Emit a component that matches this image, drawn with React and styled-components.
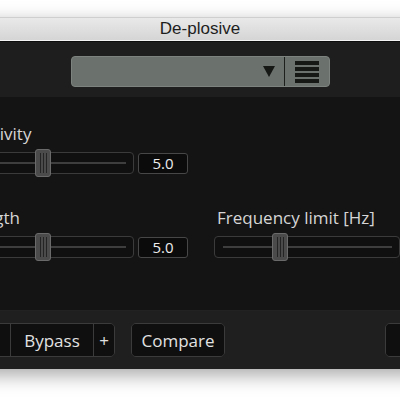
import React from "react";
import styled, {createGlobalStyle} from "styled-components";

const GlobalStyle = createGlobalStyle`
  html, body {
    margin: 0;
    padding: 0;
    background: #ffffff;
    overflow: hidden;
  }
`;

const Page = styled.div`
  width: 400px;
  height: 400px;
  overflow: hidden;
  padding-top: 17px;
  box-sizing: border-box;
`;

const Window = styled.div`
  width: 600px;
  margin-left: -100px;
  display: flex;
  flex-direction: column;
  box-shadow: 0 6px 18px rgba(0, 0, 0, 0.35);
  font-family: "Open Sans", "Noto Sans", sans-serif;
`;

const TitleBar = styled.div`
  height: 24px;
  box-sizing: border-box;
  border-top: 1px solid #cfcfcf;
  border-bottom: 1px solid #f4f4f4;
  background: linear-gradient(#e9e9e9, #d5d5d5);
  display: flex;
  align-items: center;
  justify-content: center;
  font-family: "Liberation Sans", Arial, sans-serif;
  font-size: 17px;
  color: #1e1e1e;
`;

const Header = styled.div`
  height: 56px;
  background: #1e1e1e;
  border-top: 1px solid #0e0e0e;
  display: flex;
  justify-content: center;
  align-items: flex-start;
  padding-top: 14px;
  box-sizing: border-box;
`;

const Preset = styled.div`
  width: 259px;
  height: 31px;
  display: flex;
  border-radius: 4px;
  border: 1px solid #7d837e;
  background: #6b716d;
  box-sizing: border-box;
  overflow: hidden;
`;

const PresetField = styled.div`
  flex: 1;
  display: flex;
  align-items: center;
  justify-content: flex-end;
  padding-right: 8px;
  border-right: 1px solid #1d1f1d;
`;

const PresetMenu = styled.div`
  width: 44px;
  display: flex;
  align-items: center;
  justify-content: center;
`;

const Main = styled.div`
  height: 213px;
  background: #141414;
  box-sizing: border-box;
  padding: 25px 0 0 52px;
  display: grid;
  grid-template-columns: 240px 190px;
  grid-template-rows: 84px 84px;
  column-gap: 22px;
  align-content: start;
`;

const Control = styled.div`
  display: flex;
  flex-direction: column;
  gap: 3px;
`;

const Label = styled.div`
  font-size: 17px;
  line-height: 24px;
  color: #d6d6d6;
  padding-left: ${p => p.$indent || 0}px;
`;

const SliderRow = styled.div`
  display: flex;
  align-items: center;
  gap: 4px;
  height: 28px;
`;

const Track = styled.div`
  position: relative;
  width: ${p => p.$width}px;
  height: 22px;
  border: 1px solid #3b3b3b;
  border-radius: 4px;
  box-sizing: border-box;
  background: #101010;
`;

const Groove = styled.div`
  position: absolute;
  left: 8px;
  right: 7px;
  top: 9px;
  height: 2px;
  background: #3e3e3e;
`;

const Thumb = styled.div`
  position: absolute;
  top: -4px;
  width: 16px;
  height: 28px;
  box-sizing: border-box;
  border: 1px solid #6a6a6a;
  border-radius: 3px;
  background: #4b4b4b;
  display: flex;
  justify-content: center;
  gap: 2px;
  padding: 3px 0;
  &::before, &::after, & > span {
    content: "";
    display: block;
    width: 1px;
    background: #242424;
  }
`;

const ValueBox = styled.div`
  width: 50px;
  height: 21px;
  box-sizing: border-box;
  border: 1px solid #474747;
  border-radius: 3px;
  background: #0b0b0b;
  color: #ececec;
  font-size: 15px;
  display: flex;
  align-items: center;
  justify-content: center;
`;

const Footer = styled.div`
  height: 59px;
  background: #1f1f1f;
  border-top: 1px solid #222;
  box-sizing: border-box;
  display: flex;
  align-items: center;
  padding: 0 43px 0 39px;
`;

const Group = styled.div`
  display: flex;
  height: 34px;
  border: 1px solid #3b3b3b;
  border-radius: 5px;
  overflow: hidden;
  box-sizing: border-box;
  margin-right: ${p => p.$gap || 0}px;
  margin-left: ${p => (p.$right ? "auto" : "0")};
`;

const Button = styled.div`
  width: ${p => p.$width}px;
  background: #0f0f0f;
  color: #e2e2e2;
  font-size: 17px;
  display: flex;
  align-items: center;
  justify-content: center;
  box-sizing: border-box;
  & + & {
    border-left: 1px solid #3b3b3b;
  }
`;

const Slider = ({width, pos}) => (
  <Track $width={width}>
    <Groove/>
    <Thumb style={{left: pos}}><span/></Thumb>
  </Track>
);

const App = () => {
  return (
    <Page>
      <GlobalStyle/>
      <Window>
        <TitleBar>De-plosive</TitleBar>
        <Header>
          <Preset>
            <PresetField>
              <svg width="14" height="13" viewBox="0 0 14 13">
                <polygon points="1,1 13,1 7,12" fill="#161816"/>
              </svg>
            </PresetField>
            <PresetMenu>
              <svg width="24" height="22" viewBox="0 0 24 22">
                <rect x="0" y="0" width="24" height="4" fill="#161816"/>
                <rect x="0" y="6" width="24" height="4" fill="#161816"/>
                <rect x="0" y="12" width="24" height="4" fill="#161816"/>
                <rect x="0" y="18" width="24" height="4" fill="#161816"/>
              </svg>
            </PresetMenu>
          </Preset>
        </Header>
        <Main>
          <Control>
            <Label>Sensitivity</Label>
            <SliderRow>
              <Slider width={182} pos={82}/>
              <ValueBox>5.0</ValueBox>
            </SliderRow>
          </Control>
          <div/>
          <Control>
            <Label>Strength</Label>
            <SliderRow>
              <Slider width={182} pos={82}/>
              <ValueBox>5.0</ValueBox>
            </SliderRow>
          </Control>
          <Control>
            <Label $indent={3}>Frequency limit [Hz]</Label>
            <SliderRow>
              <Slider width={186} pos={57}/>
            </SliderRow>
          </Control>
        </Main>
        <Footer>
          <Group $gap={16}>
            <Button $width={70}/>
            <Button $width={83}>Bypass</Button>
            <Button $width={21}>+</Button>
          </Group>
          <Group>
            <Button $width={92}>Compare</Button>
          </Group>
          <Group $right>
            <Button $width={70}/>
          </Group>
        </Footer>
      </Window>
    </Page>
  );
};

export default App;
